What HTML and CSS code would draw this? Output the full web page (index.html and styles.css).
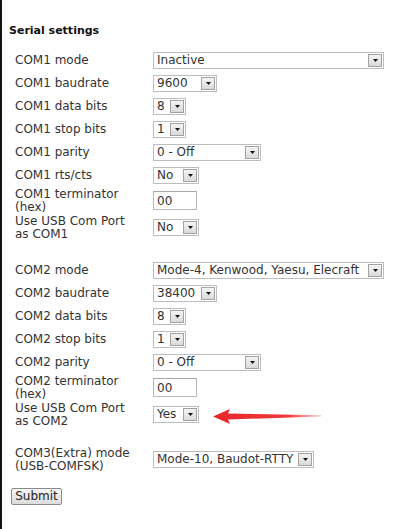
FILE: index.html
```html
<!DOCTYPE html>
<html>
<head>
<meta charset="utf-8">
<link rel="stylesheet" href="styles.css">
</head>
<body>
<div class="page">
  <h2 class="title">Serial settings</h2>
  <form class="form">
    <table class="grid">
      <tr class="r1"><td class="lab">COM1 mode</td><td><span class="sel w-mode"><select><option>Inactive</option></select><span class="btn"><svg width="5" height="3" viewBox="0 0 5 3"><path d="M0 0H5L2.5 3Z" fill="#111"/></svg></span></span></td></tr>
      <tr class="r1"><td class="lab">COM1 baudrate</td><td><span class="sel w-baud"><select><option>9600</option></select><span class="btn"><svg width="5" height="3" viewBox="0 0 5 3"><path d="M0 0H5L2.5 3Z" fill="#111"/></svg></span></span></td></tr>
      <tr class="r1"><td class="lab">COM1 data bits</td><td><span class="sel w-bits"><select><option>8</option></select><span class="btn"><svg width="5" height="3" viewBox="0 0 5 3"><path d="M0 0H5L2.5 3Z" fill="#111"/></svg></span></span></td></tr>
      <tr class="r1"><td class="lab">COM1 stop bits</td><td><span class="sel w-bits"><select><option>1</option></select><span class="btn"><svg width="5" height="3" viewBox="0 0 5 3"><path d="M0 0H5L2.5 3Z" fill="#111"/></svg></span></span></td></tr>
      <tr class="r1"><td class="lab">COM1 parity</td><td><span class="sel w-par"><select><option>0 - Off</option></select><span class="btn"><svg width="5" height="3" viewBox="0 0 5 3"><path d="M0 0H5L2.5 3Z" fill="#111"/></svg></span></span></td></tr>
      <tr class="r1"><td class="lab">COM1 rts/cts</td><td><span class="sel w-yn"><select><option>No</option></select><span class="btn"><svg width="5" height="3" viewBox="0 0 5 3"><path d="M0 0H5L2.5 3Z" fill="#111"/></svg></span></span></td></tr>
      <tr class="r2"><td class="lab">COM1 terminator (hex)</td><td><input class="txt" type="text" value="00"></td></tr>
      <tr class="r2"><td class="lab">Use USB Com Port as COM1</td><td><span class="sel w-yn"><select><option>No</option></select><span class="btn"><svg width="5" height="3" viewBox="0 0 5 3"><path d="M0 0H5L2.5 3Z" fill="#111"/></svg></span></span></td></tr>
      <tr class="gap"><td colspan="2"></td></tr>
      <tr class="r1"><td class="lab">COM2 mode</td><td><span class="sel w-mode"><select><option>Mode-4, Kenwood, Yaesu, Elecraft</option></select><span class="btn"><svg width="5" height="3" viewBox="0 0 5 3"><path d="M0 0H5L2.5 3Z" fill="#111"/></svg></span></span></td></tr>
      <tr class="r1"><td class="lab">COM2 baudrate</td><td><span class="sel w-baud"><select><option>38400</option></select><span class="btn"><svg width="5" height="3" viewBox="0 0 5 3"><path d="M0 0H5L2.5 3Z" fill="#111"/></svg></span></span></td></tr>
      <tr class="r1"><td class="lab">COM2 data bits</td><td><span class="sel w-bits"><select><option>8</option></select><span class="btn"><svg width="5" height="3" viewBox="0 0 5 3"><path d="M0 0H5L2.5 3Z" fill="#111"/></svg></span></span></td></tr>
      <tr class="r1"><td class="lab">COM2 stop bits</td><td><span class="sel w-bits"><select><option>1</option></select><span class="btn"><svg width="5" height="3" viewBox="0 0 5 3"><path d="M0 0H5L2.5 3Z" fill="#111"/></svg></span></span></td></tr>
      <tr class="r1"><td class="lab">COM2 parity</td><td><span class="sel w-par"><select><option>0 - Off</option></select><span class="btn"><svg width="5" height="3" viewBox="0 0 5 3"><path d="M0 0H5L2.5 3Z" fill="#111"/></svg></span></span></td></tr>
      <tr class="r2"><td class="lab">COM2 terminator (hex)</td><td><input class="txt" type="text" value="00"></td></tr>
      <tr class="r2"><td class="lab">Use USB Com Port as COM2</td><td><div class="with-arrow"><span class="sel w-yn"><select><option>Yes</option></select><span class="btn"><svg width="5" height="3" viewBox="0 0 5 3"><path d="M0 0H5L2.5 3Z" fill="#111"/></svg></span></span><svg class="arrow" width="108" height="16" viewBox="0 0 108 16"><defs><linearGradient id="ag" x1="0" y1="0" x2="1" y2="0"><stop offset="0" stop-color="#e8262a"/><stop offset="0.7" stop-color="#ee3a3c"/><stop offset="1" stop-color="#f7a0a0" stop-opacity="0.6"/></linearGradient></defs><path d="M0 8.5 L17 1 L15 5.5 L108 7.2 L108 8.4 L15 11.5 L17 16 Z" fill="url(#ag)"/></svg></div></td></tr>
      <tr class="gap"><td colspan="2"></td></tr>
      <tr class="r2"><td class="lab">COM3(Extra) mode (USB-COMFSK)</td><td><span class="sel w-com3"><select><option>Mode-10, Baudot-RTTY</option></select><span class="btn"><svg width="5" height="3" viewBox="0 0 5 3"><path d="M0 0H5L2.5 3Z" fill="#111"/></svg></span></span></td></tr>
    </table>
    <div class="actions"><button type="button" class="submit">Submit</button></div>
  </form>
</div>
</body>
</html>
```
FILE: styles.css
```css
html, body {
  margin: 0;
  padding: 0;
  background: #fff;
}
body {
  font-family: "DejaVu Sans", Verdana, sans-serif;
  font-size: 12px;
  color: #333;
}
.page {
  min-height: 529px;
  box-sizing: border-box;
  border-left: 2px solid #141414;
  padding-left: 7px;
  padding-top: 1px;
}
.title {
  font-size: 11px;
  line-height: 14px;
  font-weight: bold;
  color: #111;
  margin: 23px 0 11px 0;
}
.form {
  margin: 0;
}
.grid {
  border-collapse: collapse;
  border-spacing: 0;
}
.grid td {
  padding: 0;
  vertical-align: middle;
}
.grid .lab {
  box-sizing: border-box;
  width: 144px;
  padding: 0 18px 0 6px;
  line-height: 13px;
  color: #333;
}
.r1 td { height: 23px; }
.r2 td { height: 27px; }
.gap td { height: 18px; }

.sel {
  display: inline-flex;
  align-items: center;
  box-sizing: border-box;
  height: 17px;
  border: 1px solid #bdbdbd;
  background: #fff;
  vertical-align: middle;
}
.sel select {
  appearance: none;
  -webkit-appearance: none;
  border: 0;
  background: transparent;
  font-family: "DejaVu Sans", Verdana, sans-serif;
  font-size: 12px;
  color: #333;
  padding: 0 0 0 3px;
  margin: 0;
  height: 15px;
  line-height: 15px;
  flex: 1;
  min-width: 0;
  outline: none;
}
.btn {
  display: flex;
  align-items: center;
  justify-content: center;
  box-sizing: border-box;
  width: 14px;
  height: 13px;
  margin-right: 1px;
  border: 1px solid #a2a2a2;
  background: linear-gradient(#f4f4f4, #dadada);
}
.btn svg { display: block; }

.w-mode { width: 231px; }
.w-baud { width: 64px; }
.w-bits { width: 33px; }
.w-par { width: 108px; }
.w-yn { width: 46px; }
.w-com3 { width: 161px; }

.txt {
  box-sizing: border-box;
  width: 44px;
  height: 19px;
  border: 1px solid #b8b8b8;
  border-top-color: #a8a8a8;
  padding: 0 0 0 3px;
  margin: 0;
  font-family: "DejaVu Sans", Verdana, sans-serif;
  font-size: 12px;
  color: #333;
  vertical-align: middle;
  outline: none;
}

.with-arrow {
  display: flex;
  align-items: center;
}
.arrow {
  display: block;
  margin-left: 14px;
  margin-top: 3px;
}

.actions {
  margin-top: 15px;
  padding-left: 2px;
}
.submit {
  box-sizing: border-box;
  width: 51px;
  height: 17px;
  padding: 0;
  border: 1px solid #8a8a8a;
  border-radius: 2px;
  background: linear-gradient(#f6f6f6, #dcdcdc);
  font-family: "DejaVu Sans", Verdana, sans-serif;
  font-size: 12px;
  line-height: 15px;
  color: #222;
}
```
